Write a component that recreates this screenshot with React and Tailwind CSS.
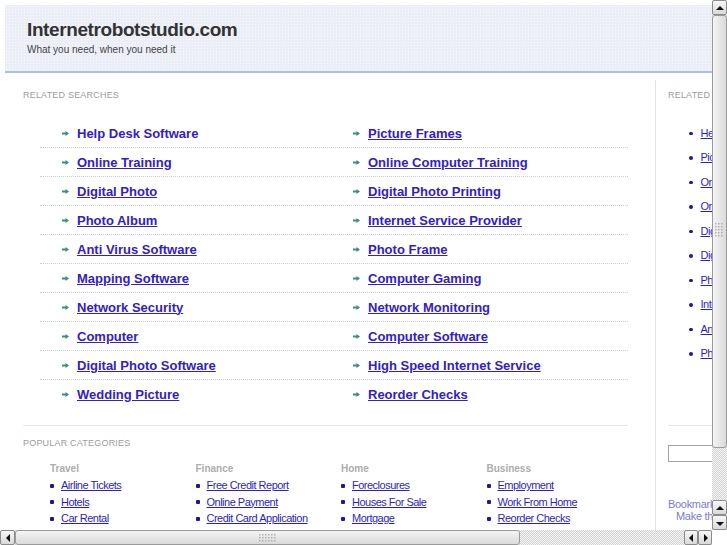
const related = [
  ['Help Desk Software', 'Picture Frames'],
  ['Online Training', 'Online Computer Training'],
  ['Digital Photo', 'Digital Photo Printing'],
  ['Photo Album', 'Internet Service Provider'],
  ['Anti Virus Software', 'Photo Frame'],
  ['Mapping Software', 'Computer Gaming'],
  ['Network Security', 'Network Monitoring'],
  ['Computer', 'Computer Software'],
  ['Digital Photo Software', 'High Speed Internet Service'],
  ['Wedding Picture', 'Reorder Checks'],
]

const sideLinks = [
  'Help Desk Software',
  'Picture Frames',
  'Online Training',
  'Online Computer Training',
  'Digital Photo',
  'Digital Photo Printing',
  'Photo Album',
  'Internet Service Provider',
  'Anti Virus Software',
  'Photo Frame',
]

const categories = [
  { title: 'Travel', links: ['Airline Tickets', 'Hotels', 'Car Rental'] },
  { title: 'Finance', links: ['Free Credit Report', 'Online Payment', 'Credit Card Application'] },
  { title: 'Home', links: ['Foreclosures', 'Houses For Sale', 'Mortgage'] },
  { title: 'Business', links: ['Employment', 'Work From Home', 'Reorder Checks'] },
]

const Arrow = () => (
  <svg width="7" height="5" viewBox="0 0 7 5" className="shrink-0">
    <polygon points="0,1.5 3.5,1.5 3.5,0 7,2.5 3.5,5 3.5,3.5 0,3.5" fill="#3b8b86" />
  </svg>
)

const Tri = ({ dir }) => {
  const pts = {
    up: '1,6 5,2 9,6',
    down: '1,3 5,7 9,3',
    left: '6,1 2,5 6,9',
    right: '3,1 7,5 3,9',
  }[dir]
  const vert = dir === 'up' || dir === 'down'
  return (
    <svg width={vert ? 10 : 8} height={vert ? 8 : 10} viewBox={vert ? '0 0 10 8' : '0 0 8 10'}>
      <polygon points={pts} fill="#111" />
    </svg>
  )
}

const Btn = ({ dir, className = '' }) => (
  <div
    className={`flex items-center justify-center rounded-[2px] border border-[#8c8c8c] bg-gradient-to-b from-[#f7f7f7] to-[#d9d9d9] ${className}`}
  >
    <Tri dir={dir} />
  </div>
)

const Grip = ({ vertical }) => (
  <svg width={vertical ? 9 : 17} height={vertical ? 17 : 8} className="opacity-70">
    {Array.from({ length: vertical ? 5 : 3 }).map((_, r) =>
      Array.from({ length: vertical ? 3 : 6 }).map((_, c) => (
        <rect key={`${r}-${c}`} x={c * 3} y={r * 3} width="1.5" height="1.5" fill="#9a9a9a" />
      ))
    )}
  </svg>
)

const track =
  'bg-[image:repeating-conic-gradient(#d2d2d2_0%_25%,#f5f5f5_0%_50%)] bg-[length:2px_2px]'

const App = () => {
  return (
    <div className="flex h-[545px] w-[727px] flex-col overflow-hidden bg-white font-['Liberation_Sans',Arial,sans-serif]">
      <div className="flex h-[530px]">
        <div className="w-[712px] overflow-hidden">
          <div className="w-[900px] pl-[5px] pt-[5px]">
            {/* speckled header band */}
            <header className="h-[68px] border-b-2 border-[#aebfe6] bg-[#eceef7] bg-[image:radial-gradient(#fafbff_0.6px,transparent_0.8px)] bg-[length:3px_3px] pl-[22px] pt-[14px]">
              <h1 className="text-[19px] font-bold leading-[22px] tracking-[-0.4px] text-[#333]">
                Internetrobotstudio.com
              </h1>
              <p className="mt-[3px] text-[10px] leading-[12px] text-[#444]">What you need, when you need it</p>
            </header>

            <div className="flex h-[460px] pt-[7px]">
              <main className="ml-[18px] w-[605px] shrink-0">
                <h2 className="mt-[10px] text-[9px] leading-[11px] tracking-[0.2px] text-[#9d9d9d] uppercase">Related Searches</h2>
                <div className="ml-[17px] mt-[18px] w-[588px]">
                  {related.map((row, i) => (
                    <div
                      key={i}
                      className={`grid h-[29px] grid-cols-[291px_1fr] border-b border-dotted ${
                        i === related.length - 1 ? 'border-transparent' : 'border-[#c3d0ec]'
                      }`}
                    >
                      {row.map((t, j) => (
                        <div key={j} className="flex items-center gap-[8px] pl-[22px]">
                          <Arrow />
                          <a
                            href="#"
                            className={`text-[13px] font-bold leading-[15px] text-[#3120cc] ${
                              i === 0 && j === 0 ? 'no-underline' : 'underline'
                            }`}
                          >
                            {t}
                          </a>
                        </div>
                      ))}
                    </div>
                  ))}
                </div>

                <div className="mt-[16px] h-px w-[605px] bg-[#e2e5f3]" />
                <h2 className="mt-[12px] text-[9px] leading-[11px] tracking-[0.2px] text-[#9d9d9d] uppercase">Popular Categories</h2>
                <div className="ml-[27px] mt-[12px] grid w-[582px] grid-cols-4">
                  {categories.map((c) => (
                    <div key={c.title}>
                      <h3 className="text-[10px] font-bold leading-[16.5px] text-[#adadad]">{c.title}</h3>
                      <ul>
                        {c.links.map((l) => (
                          <li key={l} className="flex h-[16.5px] items-center gap-[7px]">
                            <span className="h-[4px] w-[4px] shrink-0 rounded-[1px] bg-[#2211aa]" />
                            <a href="#" className="whitespace-nowrap text-[11px] leading-[13px] tracking-[-0.5px] text-[#2a1fd0] underline">
                              {l}
                            </a>
                          </li>
                        ))}
                      </ul>
                    </div>
                  ))}
                </div>
              </main>

              <aside className="ml-[27px] w-[220px] border-l border-[#dfe2f2] pl-[12px]">
                <h2 className="mt-[10px] text-[9px] leading-[11px] tracking-[0.2px] text-[#9d9d9d] uppercase">Related Searches</h2>
                <ul className="mt-[20px] pl-[21px]">
                  {sideLinks.map((l, i) => (
                    <li key={i} className="flex h-[24.5px] items-center gap-[8px]">
                      <span className="h-[3.5px] w-[3.5px] shrink-0 rounded-full bg-[#2211aa]" />
                      <a href="#" className="whitespace-nowrap text-[11px] leading-[13px] tracking-[-0.5px] text-[#2a1fd0] underline">
                        {l}
                      </a>
                    </li>
                  ))}
                </ul>
                <div className="mt-[59px] h-px w-[200px] bg-[#e2e5f3]" />
                <input type="text" className="mt-[19px] block h-[17px] w-[150px] border border-[#a3a3a3] bg-white" />
                <div className="mt-[36px] text-[11px] leading-[12px] tracking-[-0.3px] text-[#7b7bd6]">
                  <p>Bookmark this page</p>
                  <p className="ml-[8px]">Make this your Homepage</p>
                </div>
              </aside>
            </div>
          </div>
        </div>

        {/* vertical scrollbar */}
        <div className={`flex w-[15px] flex-col ${track}`}>
          <Btn dir="up" className="h-[15px]" />
          <div className="flex h-[433px] items-center justify-center rounded-[3px] border border-[#9a9a9a] bg-gradient-to-r from-[#f4f4f4] to-[#dadada]">
            <Grip vertical />
          </div>
          <div className="flex-1" />
          <Btn dir="up" className="h-[15px]" />
          <Btn dir="down" className="h-[15px]" />
        </div>
      </div>

      {/* horizontal scrollbar */}
      <div className="flex h-[15px]">
        <div className={`flex w-[712px] ${track}`}>
          <Btn dir="left" className="w-[15px]" />
          <div className="flex w-[505px] items-center justify-center rounded-[3px] border border-[#9a9a9a] bg-gradient-to-b from-[#f4f4f4] to-[#dadada]">
            <Grip />
          </div>
          <div className="flex-1" />
          <Btn dir="left" className="w-[14px]" />
          <Btn dir="right" className="w-[14px]" />
        </div>
        <div className="w-[15px] bg-white" />
      </div>
    </div>
  )
}

export default App
